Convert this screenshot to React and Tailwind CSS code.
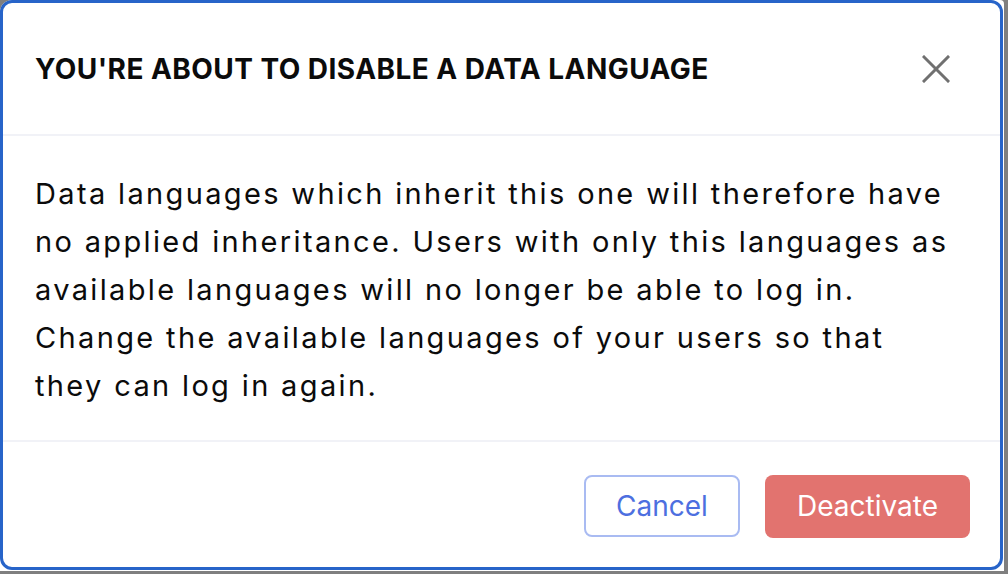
import React from "react";

export default function App() {
  return (
    <div className="w-[1008px] h-[574px] bg-[#7f7f7f] overflow-hidden" style={{ fontFamily: "Inter, 'Noto Sans', sans-serif" }}>
      <div className="w-[1004px] h-[571px] bg-white rounded-tl-[12px] rounded-tr-[4px]">
        <div className="w-[1003px] h-[570px] border-[3px] border-[#2764c9] rounded-[12px] bg-white flex flex-col overflow-hidden">
          <div className="h-[133px] flex items-center justify-between pl-[32px] pr-[50px] border-b-2 border-[#f1f2f7] shrink-0">
            <h1 className="text-[28px] font-bold text-[#0b0b0b] tracking-[0.45px]">YOU'RE ABOUT TO DISABLE A DATA LANGUAGE</h1>
            <button className="w-[28px] h-[28px] flex items-center justify-center text-[#707070]">
              <svg width="28" height="28" viewBox="0 0 28 28" fill="none" stroke="currentColor" strokeWidth="3" strokeLinecap="square">
                <path d="M2 2L26 26M26 2L2 26" />
              </svg>
            </button>
          </div>
          <div className="h-[306px] px-[32px] pt-[34px] border-b-2 border-[#f1f2f7] shrink-0">
            <p className="text-[29px] leading-[48px] text-[#0b0b0b] whitespace-nowrap tracking-[2.35px]">
              Data languages which inherit this one will therefore have<br />
              no applied inheritance. Users with only this languages as<br />
              available languages will no longer be able to log in.<br />
              Change the available languages of your users so that<br />
              they can log in again.
            </p>
          </div>
          <div className="flex-1 flex items-center justify-end gap-[25px] pr-[30px] pt-[3px]">
            <button className="w-[156px] h-[62px] rounded-[8px] border-2 border-[#a9bbf2] text-[#4d6fe0] text-[28px] flex items-center justify-center">
              Cancel
            </button>
            <button className="w-[205px] h-[63px] rounded-[8px] bg-[#e2736f] text-white text-[28px] flex items-center justify-center">
              Deactivate
            </button>
          </div>
        </div>
      </div>
    </div>
  );
}
